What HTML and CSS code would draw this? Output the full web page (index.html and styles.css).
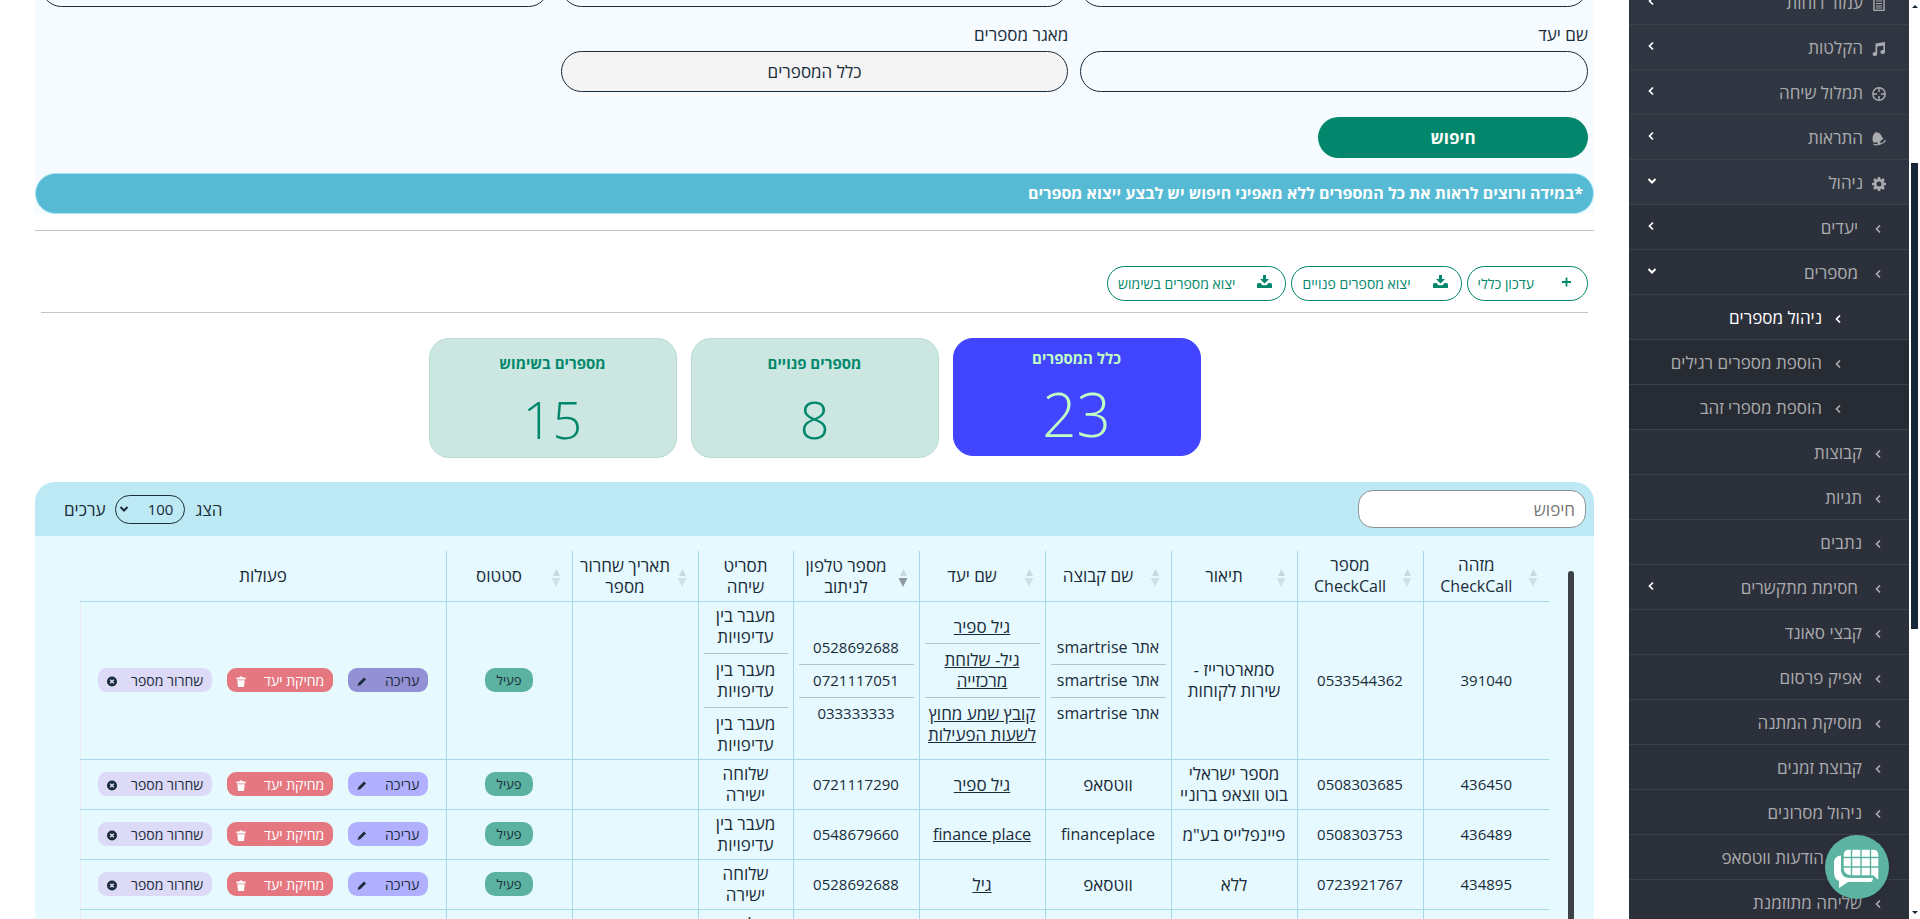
FILE: index.html
```html
<!DOCTYPE html>
<html lang="he" dir="rtl">
	<head>
		<meta charset="UTF-8">
		<title>ניהול מספרים</title>
		<link rel="stylesheet" href="styles.css">
	</head>
	<body>
		<!-- icons -->
		<svg class="sprite">
			<symbol id="i-chev" viewBox="0 0 8 10"><path d="M6 1.5 2.5 5 6 8.5" fill="none" stroke="currentColor" stroke-width="1.7"/></symbol>
			<symbol id="i-down" viewBox="0 0 10 8"><path d="M1.5 2 5 5.5 8.5 2" fill="none" stroke="currentColor" stroke-width="2"/></symbol>
			<symbol id="i-report" viewBox="0 0 14 14"><path d="M2 .5h10v13H2z" fill="none" stroke="currentColor" stroke-width="1.4"/><path d="M4 4h6M4 6.500h6M4 9h6M4 11h6" stroke="currentColor"/></symbol>
			<symbol id="i-music" viewBox="0 0 14 14"><path d="M3.500 1.500 13 0v10a2.300 1.900 0 1 1-1.600-1.800V3.500L5.200 4.600v7.400a2.300 1.900 0 1 1-1.700-1.800z" fill="currentColor"/></symbol>
			<symbol id="i-cross" viewBox="0 0 14 14"><circle cx="7" cy="7" r="6.200" fill="none" stroke="currentColor" stroke-width="1.400"/><path d="M7 1v4M7 9v4M1 7h4M9 7h4" stroke="currentColor" stroke-width="1.400"/></symbol>
			<symbol id="i-bell" viewBox="0 0 14 14"><path d="M1.500 10.500C0 8 .5 3.500 2 2c.5-1.500 2-2 3-1.500C7.500.5 9 2.500 9.800 4.500c.3.800 1 1.400 1.700 2-2.500 3-6.500 4.500-10 4z" fill="currentColor"/><path d="M1.500 12c3 2.500 11.500-1 11.800-4.300" fill="none" stroke="currentColor" stroke-width="1.200"/><circle cx="7" cy="10.700" r="1.700" fill="currentColor"/></symbol>
			<symbol id="i-cog" viewBox="0 0 14 14"><circle cx="7" cy="7" r="3.900" fill="none" stroke="currentColor" stroke-width="2.800"/><path d="M7 0v2.500M7 11.500V14M0 7h2.500M11.500 7H14M2 2l2 2M10 10l2 2M2 12l2-2M10 4l2-2" stroke="currentColor" stroke-width="2.600"/></symbol>
			<symbol id="i-plus" viewBox="0 0 10 10"><path d="M5 .5v9M.5 5h9" stroke="currentColor" stroke-width="1.800"/></symbol>
			<symbol id="i-export" viewBox="0 0 15 14"><path d="M6 0h3v4h3L7.500 8.500 3 4h3z" fill="currentColor"/><path d="M0 9.500 1 8h2.500l2 2.200h4l2-2.200H14l1 1.500V13H0z" fill="currentColor"/></symbol>
			<symbol id="i-pen" viewBox="0 0 10 10"><path d="M.5 9.500 1.500 6.500 7 1l2 2-5.500 5.500z" fill="currentColor"/></symbol>
			<symbol id="i-trash" viewBox="0 0 9 11"><path d="M0 1.500h3L3.500.5h2l.5 1h3v2H0zM.8 4.200h7.400L7.500 11h-6z" fill="currentColor"/></symbol>
			<symbol id="i-x" viewBox="0 0 10 10"><circle cx="5" cy="5" r="5" fill="currentColor"/><path d="m3.200 3.200 3.600 3.600M6.800 3.200 3.200 6.800" stroke="#dcdaf7" stroke-width="1.500"/></symbol>
			<symbol id="i-sort" viewBox="0 0 12 18"><path d="M6.500 0 10 7H3z" opacity=".8" fill="#bfd0d6"/><path class="sort-down" d="M1.500 9h9L6 18z"/></symbol>
		</svg>

		<div class="page">
			<!-- side menu -->
			<aside class="sidebar">
				<ul class="menu">
					<li><a href="#"><svg class="ico"><use href="#i-report"/></svg>עמוד דוחות<svg class="arr"><use href="#i-chev"/></svg></a></li>
					<li><a href="#"><svg class="ico"><use href="#i-music"/></svg>הקלטות<svg class="arr"><use href="#i-chev"/></svg></a></li>
					<li><a href="#"><svg class="ico"><use href="#i-cross"/></svg>תמלול שיחה<svg class="arr"><use href="#i-chev"/></svg></a></li>
					<li><a href="#"><svg class="ico"><use href="#i-bell"/></svg>התראות<svg class="arr"><use href="#i-chev"/></svg></a></li>
					<li><a href="#"><svg class="ico"><use href="#i-cog"/></svg>ניהול<svg class="arr open"><use href="#i-down"/></svg></a>
						<ul class="sub">
							<li class="parent"><a href="#"><svg class="dot"><use href="#i-chev"/></svg>יעדים<svg class="arr"><use href="#i-chev"/></svg></a></li>
							<li class="parent"><a href="#"><svg class="dot"><use href="#i-chev"/></svg>מספרים<svg class="arr open"><use href="#i-down"/></svg></a>
								<ul class="sub2">
									<li class="active"><a href="#"><svg class="dot"><use href="#i-chev"/></svg>ניהול מספרים</a></li>
									<li><a href="#"><svg class="dot"><use href="#i-chev"/></svg>הוספת מספרים רגילים</a></li>
									<li><a href="#"><svg class="dot"><use href="#i-chev"/></svg>הוספת מספרי זהב</a></li>
								</ul>
							</li>
							<li><a href="#"><svg class="dot"><use href="#i-chev"/></svg>קבוצות</a></li>
							<li><a href="#"><svg class="dot"><use href="#i-chev"/></svg>תגיות</a></li>
							<li><a href="#"><svg class="dot"><use href="#i-chev"/></svg>נתבים</a></li>
							<li class="parent"><a href="#"><svg class="dot"><use href="#i-chev"/></svg>חסימת מתקשרים<svg class="arr"><use href="#i-chev"/></svg></a></li>
							<li><a href="#"><svg class="dot"><use href="#i-chev"/></svg>קבצי סאונד</a></li>
							<li><a href="#"><svg class="dot"><use href="#i-chev"/></svg>אפיק פרסום</a></li>
							<li><a href="#"><svg class="dot"><use href="#i-chev"/></svg>מוסיקת המתנה</a></li>
							<li><a href="#"><svg class="dot"><use href="#i-chev"/></svg>קבוצת זמנים</a></li>
							<li><a href="#"><svg class="dot"><use href="#i-chev"/></svg>ניהול מסרונים</a></li>
							<li class="wide"><a href="#"><svg class="dot"><use href="#i-chev"/></svg>הודעות ווטסאפ</a></li>
							<li><a href="#"><svg class="dot"><use href="#i-chev"/></svg>שליחה מתוזמנת</a></li>
						</ul>
					</li>
				</ul>
			</aside>

			<main class="main">
				<!-- search form -->
				<form class="filter">
					<div class="fields">
						<input type="text" aria-label="מזהה">
						<input type="text" aria-label="מספר">
						<input type="text" aria-label="תיאור">
						<div class="field">
							<label for="dest">שם יעד</label>
							<input type="text" id="dest">
						</div>
						<div class="field">
							<label for="pool">מאגר מספרים</label>
							<select id="pool"><option>כלל המספרים</option></select>
						</div>
					</div>
					<button type="button" class="search-btn">חיפוש</button>
					<p class="note">*במידה ורוצים לראות את כל המספרים ללא מאפיני חיפוש יש לבצע ייצוא מספרים</p>
				</form>
				<hr class="line">

				<div class="tools">
					<button type="button"><svg class="plus"><use href="#i-plus"/></svg>עדכון כללי</button>
					<button type="button"><svg><use href="#i-export"/></svg>יצוא מספרים פנויים</button>
					<button type="button"><svg><use href="#i-export"/></svg>יצוא מספרים בשימוש</button>
				</div>

				<!-- counters -->
				<div class="cards">
					<div class="card all"><h3>כלל המספרים</h3><b>23</b></div>
					<div class="card"><h3>מספרים פנויים</h3><b>8</b></div>
					<div class="card"><h3>מספרים בשימוש</h3><b>15</b></div>
				</div>

				<section class="panel">
					<div class="panel-top">
						<input type="search" placeholder="חיפוש" aria-label="חיפוש">
						<label class="show">הצג
							<span class="pick"><select><option>100</option></select><svg><use href="#i-down"/></svg></span>
							ערכים</label>
					</div>
					<div class="panel-body">
						<div class="thumb"></div>
						<table>
							<colgroup>
								<col class="c"><col class="c"><col class="c"><col class="c"><col class="c"><col class="c"><col class="c-s"><col class="c"><col class="c"><col class="c-l">
							</colgroup>
							<thead>
								<tr>
									<th>מזהה<br><span class="lat">CheckCall</span><svg><use href="#i-sort"/></svg></th>
									<th>מספר<br><span class="lat">CheckCall</span><svg><use href="#i-sort"/></svg></th>
									<th>תיאור<svg><use href="#i-sort"/></svg></th>
									<th>שם קבוצה<svg><use href="#i-sort"/></svg></th>
									<th>שם יעד<svg><use href="#i-sort"/></svg></th>
									<th>מספר טלפון<br>לניתוב<svg class="on"><use href="#i-sort"/></svg></th>
									<th class="plain">תסריט<br>שיחה</th>
									<th>תאריך שחרור<br>מספר<svg><use href="#i-sort"/></svg></th>
									<th>סטטוס<svg><use href="#i-sort"/></svg></th>
									<th class="plain">פעולות</th>
								</tr>
							</thead>
							<tbody>
								<tr>
									<td class="num">391040</td>
									<td class="num">0533544362</td>
									<td><span class="nw">סמארטרייז -<br>שירות לקוחות</span></td>
									<td class="lat">אתר smartrise<hr>אתר smartrise<hr>אתר smartrise</td>
									<td><a href="#">גיל ספיר</a><hr><a href="#">גיל- שלוחת<br>מרכזייה</a><hr><a href="#" class="nw">קובץ שמע מחוץ<br>לשעות הפעילות</a></td>
									<td class="num">0528692688<hr>0721117051<hr>033333333</td>
									<td>מעבר בין<br>עדיפויות<hr>מעבר בין<br>עדיפויות<hr>מעבר בין<br>עדיפויות</td>
									<td></td>
									<td><span class="ok">פעיל</span></td>
									<td><div class="acts"><button class="edit hover">עריכה<svg><use href="#i-pen"/></svg></button><button class="del">מחיקת יעד<svg><use href="#i-trash"/></svg></button><button class="free">שחרור מספר<svg><use href="#i-x"/></svg></button></div></td>
								</tr>
								<tr>
									<td class="num">436450</td>
									<td class="num">0508303685</td>
									<td><span class="nw">מספר ישראלי<br>בוט ווצאפ ברוניי</span></td>
									<td>ווטסאפ</td>
									<td><a href="#">גיל ספיר</a></td>
									<td class="num">0721117290</td>
									<td>שלוחה<br>ישירה</td>
									<td></td>
									<td><span class="ok">פעיל</span></td>
									<td><div class="acts"><button class="edit">עריכה<svg><use href="#i-pen"/></svg></button><button class="del">מחיקת יעד<svg><use href="#i-trash"/></svg></button><button class="free">שחרור מספר<svg><use href="#i-x"/></svg></button></div></td>
								</tr>
								<tr>
									<td class="num">436489</td>
									<td class="num">0508303753</td>
									<td><span class="nw">פיינפלייס בע"מ</span></td>
									<td class="lat">financeplace</td>
									<td class="lat"><a href="#">finance place</a></td>
									<td class="num">0548679660</td>
									<td>מעבר בין<br>עדיפויות</td>
									<td></td>
									<td><span class="ok">פעיל</span></td>
									<td><div class="acts"><button class="edit">עריכה<svg><use href="#i-pen"/></svg></button><button class="del">מחיקת יעד<svg><use href="#i-trash"/></svg></button><button class="free">שחרור מספר<svg><use href="#i-x"/></svg></button></div></td>
								</tr>
								<tr>
									<td class="num">434895</td>
									<td class="num">0723921767</td>
									<td>ללא</td>
									<td>ווטסאפ</td>
									<td><a href="#">גיל</a></td>
									<td class="num">0528692688</td>
									<td>שלוחה<br>ישירה</td>
									<td></td>
									<td><span class="ok">פעיל</span></td>
									<td><div class="acts"><button class="edit">עריכה<svg><use href="#i-pen"/></svg></button><button class="del">מחיקת יעד<svg><use href="#i-trash"/></svg></button><button class="free">שחרור מספר<svg><use href="#i-x"/></svg></button></div></td>
								</tr>
								<tr>
									<td></td><td></td><td></td><td></td><td></td><td></td>
									<td>שלוחה<br>ישירה</td>
									<td></td><td></td><td></td>
								</tr>
							</tbody>
						</table>
					</div>
				</section>
			</main>
		</div>

		<!-- page scrollbar -->
		<div class="scroll"><i class="up"></i><i class="bar"></i><i class="dn"></i></div>

		<!-- chat -->
		<button class="chat" aria-label="צ'אט">
			<svg viewBox="0 0 64 64">
				<path d="M16 20.500c-4 0-7 3-7 7v9.500c0 5 2 8 5 9v7l9-6h22c2 0 3-2 3-4H25c-6 0-9-3-9-9z" fill="#fff"/>
				<path d="M24 14h24c4 0 6 2 6 6v26.500l-6-5.500H27c-6 0-9-3-9-8V20c0-4 2-6 6-6z" fill="#fff" stroke="#5cb3a2" stroke-width="1.400"/>
				<path d="M26.500 14v27M36 14v27M45.500 14v27M18 22.500h36M18 32h36" stroke="#5cb3a2" stroke-width="1.400"/>
			</svg>
		</button>
	</body>
</html>
```
FILE: styles.css
```css
*{
	margin: 0;
	padding: 0;
	box-sizing: border-box;
}
body{
	height: 100vh;
	overflow: hidden;
	background-color: #fff;
	color: #1a2b3a;
	font: 17px/21px "Open Sans", "Noto Sans", sans-serif;
}
button,input,select{
	font-family: inherit;
	color: inherit;
}
ul{
	list-style: none;
}
a{
	color: inherit;
}
.sprite{
	display: none;
}
.page{
	height: 100vh;
	overflow: hidden;
	display: flex;
	align-items: flex-start;
	padding-right: 11px;
}

/* side menu */
.sidebar{
	width: 280px;
	flex: none;
	margin-top: -20px;
	background-color: #303641;
	color: #aaabae;
}
.menu a{
	display: flex;
	align-items: center;
	height: 45px;
	padding: 1px 23px 0 18px;
	border-bottom: 1px solid #3b404b;
	text-decoration: none;
}
.ico{
	width: 14px;
	height: 14px;
	margin: 2px 0 0 9px;
}
.dot{
	width: 8px;
	height: 10px;
	margin: 2px 4px 0 12px;
}
.arr{
	width: 8px;
	height: 10px;
	margin: 0 auto 4px 0;
	color: #fff;
}
.arr.open{
	width: 10px;
	height: 8px;
}
.sub{
	background-color: #2c303b;
}
.parent>a>.dot{
	margin-left: 16px;
}
.wide .dot{
	margin-left: 50px;
}
.sub2{
	background-color: #272b33;
}
.sub2 a{
	padding-right: 63px;
}
.active{
	background-color: #2c303b;
	color: #fff;
}

/* form */
.main{
	flex: 1;
	min-width: 0;
	margin-top: -34px;
	padding: 0 35px;
}
.filter{
	background-color: #f5fbfe;
}
.fields{
	display: grid;
	grid-template-columns: 1fr 1fr 1fr;
	column-gap: 12px;
	padding: 0 6px;
}
.fields input,.fields select{
	display: block;
	width: 100%;
	height: 41px;
	border: 1px solid #1a2b3a;
	border-radius: 21px;
	background-color: transparent;
}
.fields select{
	appearance: none;
	background-color: #f4f4f4;
	text-align-last: center;
	font-size: 17px;
}
.field label{
	display: block;
	padding: 17px 0 6px;
}
.search-btn{
	display: block;
	width: 270px;
	height: 41px;
	margin: 25px 6px 15px;
	border: 0;
	border-radius: 21px;
	background-color: #02876c;
	color: #fff;
	font-size: 17px;
	font-weight: bold;
}
.note{
	height: 41px;
	padding: 0 10px;
	border: 1px solid #a9e6f4;
	border-radius: 21px;
	background-color: #56bad4;
	color: #fff;
	font-size: 16px;
	font-weight: bold;
	line-height: 38px;
}
.line{
	margin-top: 16px;
	border: 0;
	border-top: 1px solid #c4c4c4;
}
.tools{
	display: flex;
	gap: 5px;
	margin: 35px 6px 0;
	padding-bottom: 11px;
	border-bottom: 1px solid #c4c4c4;
}
.tools button{
	display: flex;
	align-items: center;
	gap: 22px;
	height: 35px;
	padding: 0 13px 0 10px;
	border: 1px solid #02876c;
	border-radius: 18px;
	background-color: #fff;
	color: #02876c;
	font-size: 14px;
}
.tools svg{
	width: 15px;
	height: 14px;
	margin-bottom: 4px;
}
.tools .plus{
	height: 10px;
	margin-left: 3px;
}

/* counters */
.cards{
	display: flex;
	justify-content: center;
	align-items: flex-start;
	gap: 14px;
	margin-top: 25px;
}
.card{
	width: 248px;
	height: 120px;
	padding-top: 14px;
	border: 1px solid #b7dcd3;
	border-radius: 20px;
	background-color: #cce7e1;
	color: #02876c;
	text-align: center;
}
.card h3{
	font-size: 15px;
	line-height: 21px;
}
.card b{
	display: block;
	font-size: 52px;
	font-weight: 300;
	line-height: 72px;
	margin-top: 9px;
}
.card.all{
	height: 118px;
	padding-top: 9px;
	border-color: #4245ff;
	background-color: #4245ff;
	color: #c0ffc4;
}
.card.all b{
	font-size: 60px;
}

/* table */
.panel{
	margin-top: 24px;
	border-radius: 20px 20px 0 0;
	background-color: #e5f9ff;
	overflow: hidden;
}
.panel-top{
	display: flex;
	justify-content: space-between;
	align-items: center;
	height: 54px;
	padding: 0 8px 0 29px;
	background-color: #bde9f5;
}
.panel-top input{
	width: 228px;
	height: 38px;
	padding: 0 10px;
	border: 1px solid #8b9194;
	border-radius: 15px;
	background-color: #fff;
	font-size: 17px;
}
.show{
	display: flex;
	align-items: center;
	gap: 10px;
}
.pick{
	position: relative;
}
.pick select{
	appearance: none;
	display: block;
	width: 70px;
	height: 29px;
	padding: 0 11px;
	border: 1px solid #1a2b3a;
	border-radius: 15px;
	background-color: transparent;
	font-size: 15px;
}
.pick svg{
	position: absolute;
	left: 4px;
	top: 10px;
	width: 10px;
	height: 8px;
}
.panel-body{
	display: flex;
	padding: 15px 20px 0 45px;
}
.thumb{
	flex: none;
	width: 6px;
	margin: 20px 0 0 19px;
	border-radius: 3px;
	background-color: #3c4145;
}
table{
	flex: 1;
	width: 100%;
	table-layout: fixed;
	border-collapse: collapse;
	text-align: center;
	font-size: 17px;
}
.c{
	width: 126px;
}
.c-s{
	width: 95px;
}
th,td{
	border-bottom: 1px solid #a6d9e6;
	border-left: 1px solid #a6d9e6;
}
th{
	position: relative;
	height: 50px;
	padding: 3px 25px 4px 5px;
	font-weight: normal;
	white-space: nowrap;
}
th.plain{
	padding: 3px 5px 4px;
}
th:last-child{
	border-left: 0;
}
td:last-child{
	border-left-color: #e8eaec;
}
th svg{
	position: absolute;
	right: 10px;
	top: 18px;
	width: 12px;
	height: 18px;
	fill: #d0e2e8;
}
th svg.on{
	fill: #8f9a9e;
}
td{
	padding: 3px 5px 4px;
}
.lat{
	font-size: 16px;
}
.num{
	font-size: 15px;
}
td hr{
	margin: 6px 0 5px;
	border: 0;
	border-top: 1px solid #b3c3ca;
}
.nw{
	white-space: nowrap;
}
.ok{
	display: inline-block;
	width: 48px;
	height: 24px;
	border-radius: 10px;
	background-color: #5cb2a0;
	font-size: 13px;
	line-height: 24px;
	vertical-align: middle;
}
.acts{
	display: flex;
	justify-content: center;
	gap: 15px;
}
.acts button{
	display: flex;
	justify-content: space-between;
	align-items: center;
	height: 24px;
	padding: 0 9px;
	border: 0;
	border-radius: 9px;
	font-size: 14px;
}
.acts svg{
	width: 10px;
	height: 11px;
	margin-top: 3px;
}
.acts .edit{
	width: 80px;
	background-color: #b0b0ff;
}
.acts .edit.hover{
	background-color: #9391d3;
}
.acts .del{
	width: 106px;
	background-color: #e47780;
	color: #fff;
}
.acts .free{
	width: 114px;
	background-color: #dcdaf7;
}

/* scrollbar of the page */
.scroll{
	position: fixed;
	top: 0;
	bottom: 0;
	right: 0;
	width: 11px;
	display: grid;
	grid-template-rows: 163fr 466fr 290fr;
	justify-content: center;
	background-color: #fff;
}
.scroll i{
	width: 7px;
}
.scroll .bar{
	background-color: #152636;
}
.scroll .up::before,.scroll .dn::before{
	content: "";
	position: absolute;
	top: 5px;
	border: 3px solid transparent;
	border-top: 0;
	border-bottom-color: #152636;
}
.scroll .dn::before{
	top: auto;
	bottom: 5px;
	border: 3px solid transparent;
	border-bottom: 0;
	border-top-color: #152636;
}
.chat{
	position: fixed;
	right: 31px;
	bottom: 20px;
	width: 64px;
	height: 64px;
	border: 0;
	border-radius: 50%;
	background-color: #5cb3a2;
	box-shadow: 0 2px 12px rgba(0,0,0,0.15);
}
.chat svg{
	display: block;
}
```
